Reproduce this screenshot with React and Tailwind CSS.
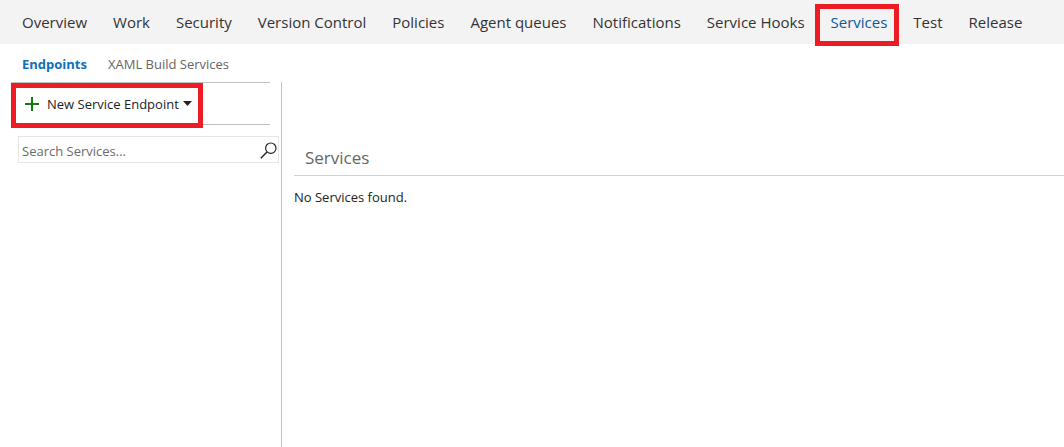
const areas = [
  'Overview',
  'Work',
  'Security',
  'Version Control',
  'Policies',
  'Agent queues',
  'Notifications',
  'Service Hooks',
  'Services',
  'Test',
  'Release',
];

function Highlight({ className }) {
  return (
    <span
      aria-hidden="true"
      className={`pointer-events-none absolute border-5 border-[#ed1c24] ${className}`}
    />
  );
}

function AreaNav() {
  return (
    <nav aria-label="Settings areas" className="bg-[#f3f3f3]">
      <ul className="flex h-11 items-center gap-[26px] px-[22px] text-[15px] leading-5 whitespace-nowrap text-[#333333]">
        {areas.map((area) => (
          <li key={area} className="relative">
            {area === 'Services' ? (
              <>
                <a href="#services" aria-current="page" className="text-[#0b5aa0]">
                  {area}
                </a>
                <Highlight className="-top-2 -right-3 -bottom-[14px] -left-4" />
              </>
            ) : (
              <a href="#area">{area}</a>
            )}
          </li>
        ))}
      </ul>
    </nav>
  );
}

function SubNav() {
  return (
    <nav aria-label="Services views" className="flex h-[38px] items-center gap-[21px] px-[22px] pt-[2px] text-[13px] leading-5">
      <a href="#endpoints" aria-current="page" className="font-bold text-[#106ebe]">
        Endpoints
      </a>
      <a href="#xaml" className="text-[#666666]">
        XAML Build Services
      </a>
    </nav>
  );
}

function Sidebar() {
  return (
    <aside className="w-[282px] shrink-0 border-r border-[#c0c0c0] pl-[11px]">
      <div className="relative mr-[11px] flex h-[43px] items-center border-y border-[#c0c0c0] pl-[14px]">
        <button type="button" className="flex items-center text-[13px] leading-5 whitespace-nowrap text-[#222222]">
          <svg width="14" height="14" viewBox="0 0 14 14" aria-hidden="true" className="mr-2">
            <path d="M0 6h6V0h2v6h6v2H8v6H6V8H0z" fill="#107c10" />
          </svg>
          New Service Endpoint
          <svg width="9" height="5" viewBox="0 0 9 5" aria-hidden="true" className="ml-1">
            <path d="M0 0h9L4.500 5z" fill="#222222" />
          </svg>
        </button>
        <Highlight className="top-0 -bottom-1 left-0 w-48" />
      </div>
      <form role="search" className="mt-[11px] mr-[2px] ml-[7px] flex h-[27px] items-center border border-[#e6e6e6] pr-px pl-[3px]">
        <input
          type="text"
          aria-label="Search Services"
          placeholder="Search Services..."
          className="min-w-0 flex-1 bg-transparent pt-[2px] text-[13px] leading-5 outline-none placeholder:text-[#6a6a6a]"
        />
        <button type="submit" aria-label="Search" className="pt-[2px]">
          <svg width="17" height="17" viewBox="0 0 17 17" fill="none" stroke="#222222" aria-hidden="true" className="block">
            <circle cx="10.800" cy="6.200" r="5.200" strokeWidth="1.200" />
            <path d="M7 10L0.800 16.200" strokeWidth="1.400" />
          </svg>
        </button>
      </form>
    </aside>
  );
}

export default function App() {
  return (
    <div className="flex min-h-screen flex-col bg-white font-['Open_Sans','Noto_Sans',sans-serif]">
      <AreaNav />
      <SubNav />
      <div className="flex flex-1">
        <Sidebar />
        <main className="min-w-0 flex-1 pt-16 pl-3">
          <h1 className="border-b border-[#d2d2d2] pb-[5px] pl-[11px] text-[17px] leading-6 text-[#666666]">
            Services
          </h1>
          <p className="pt-[11px] text-[13px] leading-5 text-[#222222]">No Services found.</p>
        </main>
      </div>
    </div>
  );
}
